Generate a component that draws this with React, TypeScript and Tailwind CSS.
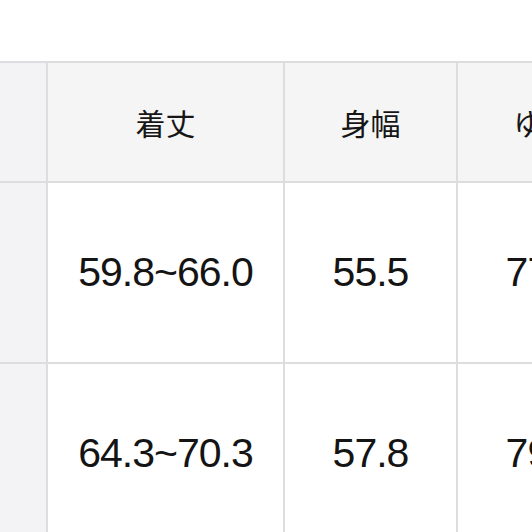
const headers = ['着丈', '身幅', 'ゆき'];

const rows = [
  ['59.8~66.0', '55.5', '77.5'],
  ['64.3~70.3', '57.8', '79.5'],
];

const jp = { fontFamily: '"Noto Sans CJK JP", "Noto Sans", sans-serif' };
const num = { fontFamily: '"Liberation Sans", Arial, sans-serif' };

export default function App() {
  return (
    <div className="w-[532px] h-[532px] overflow-hidden bg-white">
      <div className="mt-[61px] w-[629px] grid grid-cols-[46px_235px_171px_171px] grid-rows-[118px_179px_179px] gap-[2px] pt-[2px] bg-[#dddde0]">
        <div className="bg-[#f3f3f5]" />
        {headers.map((h) => (
          <div
            key={h}
            style={jp}
            className="bg-[#f5f5f5] flex items-center justify-center text-[30px] text-[#161616]"
          >
            {h}
          </div>
        ))}
        {rows.map((r, i) => (
          <div key={i} className="contents">
            <div className="bg-[#f3f3f5]" />
            {r.map((v, j) => (
              <div
                key={j}
                style={num}
                className="bg-white flex items-center justify-center text-[41px] tracking-[-1px] text-[#141414]"
              >
                {v}
              </div>
            ))}
          </div>
        ))}
      </div>
    </div>
  );
}
